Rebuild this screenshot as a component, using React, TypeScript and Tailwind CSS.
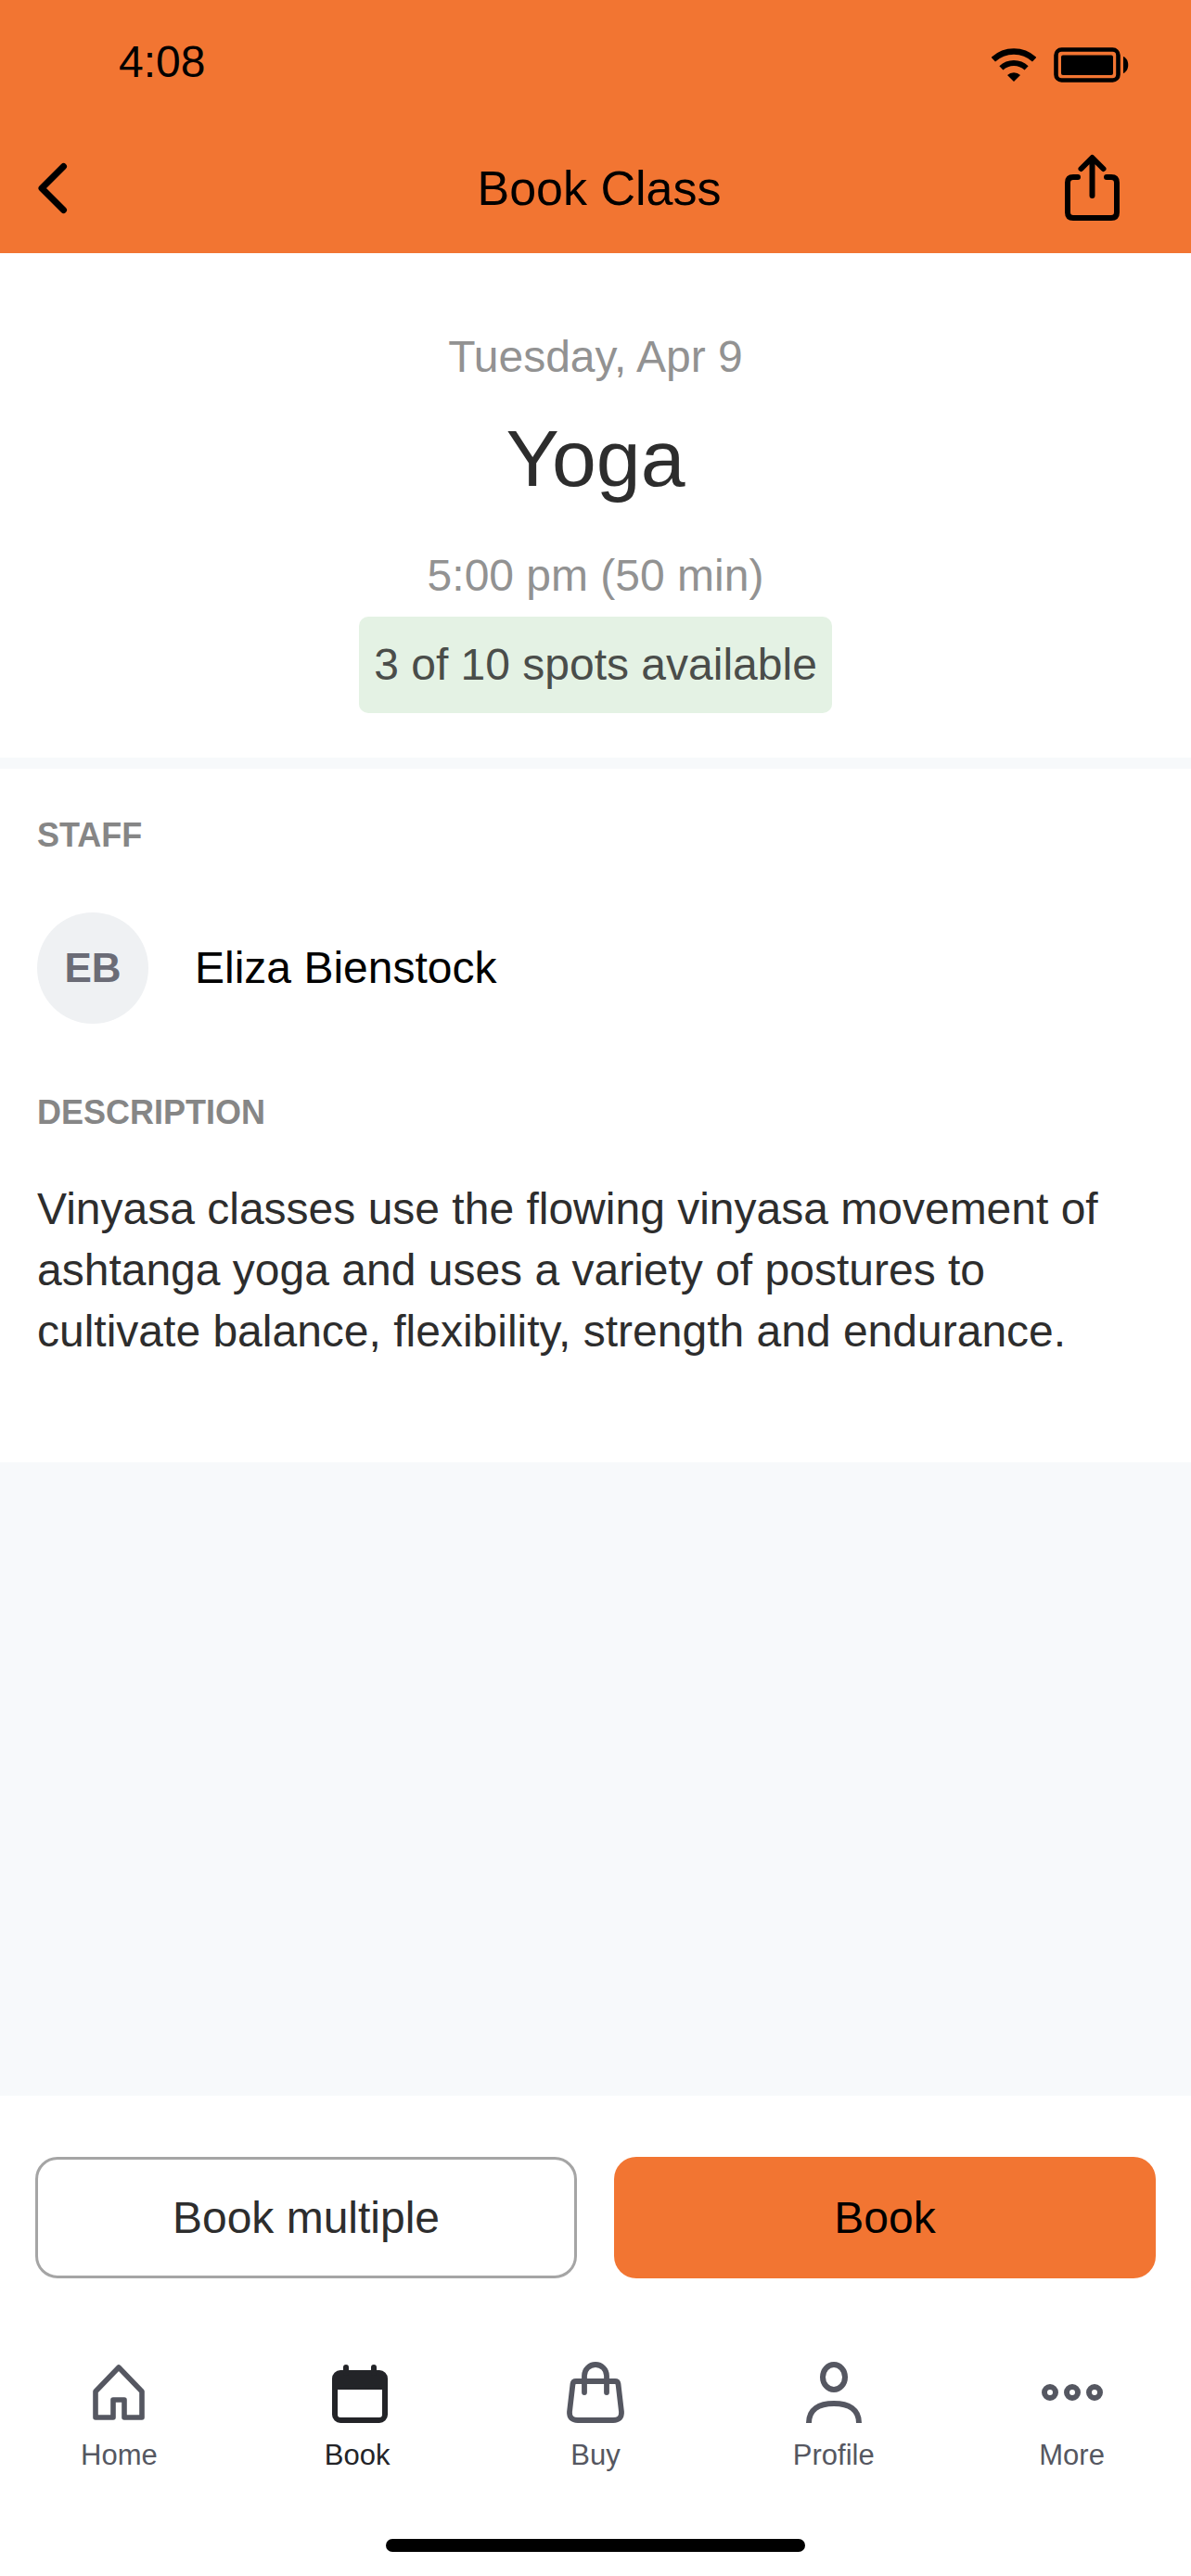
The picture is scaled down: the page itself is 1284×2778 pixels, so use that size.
import React, { useState } from 'react';

interface IconProps {
  className?: string;
}

interface Tab {
  id: string;
  label: string;
  Icon: React.FC<IconProps>;
}

const WifiIcon: React.FC<IconProps> = ({ className = '' }) => (
  <svg className={className} viewBox="0 0 48 36" fill="none" stroke="currentColor" aria-hidden="true">
    <path strokeWidth={6.5} d="M1.8 12.2A32.5 32.5 0 0 1 46.2 12.2" />
    <path strokeWidth={6} d="M10.4 21.4A20 20 0 0 1 37.6 21.4" />
    <path fill="currentColor" stroke="none" d="M24 36L17 29A10 10 0 0 1 31 29Z" />
  </svg>
);

const BatteryIcon: React.FC<IconProps> = ({ className = '' }) => (
  <svg className={className} viewBox="0 0 81 38" fill="none" aria-hidden="true">
    <rect x="2.5" y="2.5" width="67" height="33" rx="6" stroke="currentColor" strokeWidth={4.6} />
    <rect x="8" y="8.5" width="56" height="21.5" rx="2" fill="currentColor" />
    <path fill="currentColor" d="M75 10C82 12.5 82 25.5 75 28Z" />
  </svg>
);

const BackIcon: React.FC<IconProps> = ({ className = '' }) => (
  <svg className={className} viewBox="0 0 40 60" fill="none" stroke="currentColor" strokeWidth={7} strokeLinecap="round" strokeLinejoin="round" aria-hidden="true">
    <path d="M32.5 6.5L9 30L32.5 53.5" />
  </svg>
);

const ShareIcon: React.FC<IconProps> = ({ className = '' }) => (
  <svg className={className} viewBox="0 0 72 80" fill="none" stroke="currentColor" strokeWidth={6} strokeLinecap="round" strokeLinejoin="round" aria-hidden="true">
    <path d="M20 28H15Q9 28 9 34V66Q9 72 15 72H56Q62 72 62 66V34Q62 28 56 28H51" />
    <path d="M35.5 48V7.5M23.5 19L35.5 7L47.5 19" />
  </svg>
);

const HomeIcon: React.FC<IconProps> = ({ className = '' }) => (
  <svg className={className} viewBox="0 0 72 72" fill="none" stroke="currentColor" strokeWidth={5.6} strokeLinejoin="round" aria-hidden="true">
    <path d="M11 63V35L36 9L61 35V63H42V44H30V63Z" />
  </svg>
);

const CalendarIcon: React.FC<IconProps> = ({ className = '' }) => (
  <svg className={className} viewBox="-3 0 72 72" fill="none" stroke="currentColor" strokeWidth={6} strokeLinecap="round" aria-hidden="true">
    <rect x="9" y="15" width="54" height="51" rx="6" />
    <path fill="currentColor" stroke="none" d="M9 15H63V33H9Z" />
    <path d="M21 9V15M51 9V15" />
  </svg>
);

const BagIcon: React.FC<IconProps> = ({ className = '' }) => (
  <svg className={className} viewBox="0 0 72 72" fill="none" stroke="currentColor" strokeWidth={5.8} strokeLinecap="round" strokeLinejoin="round" aria-hidden="true">
    <path d="M15 24H57Q60 24 60.5 27L64 57Q64.5 66 55 66H17Q7.5 66 8 57L11.5 27Q12 24 15 24Z" />
    <path d="M24 36V18A12 12 0 0 1 48 18V36" />
  </svg>
);

const ProfileIcon: React.FC<IconProps> = ({ className = '' }) => (
  <svg className={className} viewBox="0 0 72 72" fill="none" stroke="currentColor" strokeWidth={6} aria-hidden="true">
    <ellipse cx="36" cy="19.5" rx="12" ry="13.5" />
    <path d="M9 69C9 54 20 48 36 48S63 54 63 69" />
  </svg>
);

const MoreIcon: React.FC<IconProps> = ({ className = '' }) => (
  <svg className={className} viewBox="0 0 72 72" fill="none" stroke="currentColor" strokeWidth={6} aria-hidden="true">
    <circle cx="12" cy="36" r="6" />
    <circle cx="36" cy="36" r="6" />
    <circle cx="60" cy="36" r="6" />
  </svg>
);

const tabs: Tab[] = [
  { id: 'home', label: 'Home', Icon: HomeIcon },
  { id: 'book', label: 'Book', Icon: CalendarIcon },
  { id: 'buy', label: 'Buy', Icon: BagIcon },
  { id: 'profile', label: 'Profile', Icon: ProfileIcon },
  { id: 'more', label: 'More', Icon: MoreIcon }
];

const Header: React.FC = () => (
  <header className="bg-[#f27532] text-black">
    <div className="flex h-[133px] items-center justify-between pl-32 pr-[67px]">
      <span className="text-[48px] leading-[60px]">4:08</span>
      <div className="mt-[7px] flex items-center gap-[19px]">
        <WifiIcon className="h-9 w-12" />
        <BatteryIcon className="h-[38px] w-[81px]" />
      </div>
    </div>
    <div className="grid h-[140px] grid-cols-[1fr_auto_1fr] items-center pl-9 pr-7">
      <button type="button" aria-label="Back" className="justify-self-start">
        <BackIcon className="h-[60px] w-10" />
      </button>
      <h1 className="text-[52px] leading-[60px]">Book Class</h1>
      <button type="button" aria-label="Share" className="mr-[42px] justify-self-end">
        <ShareIcon className="h-20 w-[72px]" />
      </button>
    </div>
  </header>
);

const ClassSummary: React.FC = () => (
  <section className="flex flex-col items-center pt-[82px] pb-12 text-[48px] leading-[60px]">
    <p className="text-[#929292]">Tuesday, Apr 9</p>
    <h2 className="mt-[29px] text-[86px] leading-[100px] text-[#2d2d2d]">Yoga</h2>
    <p className="mt-[47px] text-[#929292]">5:00 pm (50 min)</p>
    <p className="mt-[14px] rounded-[10px] bg-[#e4f2e4] px-4 py-[22px] text-[#4a4d4a]">3 of 10 spots available</p>
  </section>
);

const ClassDetails: React.FC = () => (
  <section className="px-10 pt-[50px] pb-[108px]">
    <h3 className="text-[36px] leading-[44px] font-bold text-[#868686]">STAFF</h3>
    <div className="mt-[61px] flex items-center gap-[50px]">
      <div className="flex size-[120px] items-center justify-center rounded-full bg-[#eff1f3] text-[44px] font-bold text-[#6b6c76]">
        EB
      </div>
      <span className="text-[48px] leading-[60px] text-black">Eliza Bienstock</span>
    </div>
    <h3 className="mt-[74px] text-[36px] leading-[44px] font-bold text-[#868686]">DESCRIPTION</h3>
    <p className="mt-[49px] text-[48px] leading-[66px] text-[#2d2d2d]">
      Vinyasa classes use the flowing vinyasa movement of ashtanga yoga and uses a variety of postures to cultivate
      balance, flexibility, strength and endurance.
    </p>
  </section>
);

export default function App() {
  const [activeTab, setActiveTab] = useState('book');

  return (
    <div className="flex min-h-screen flex-col bg-white font-['Liberation_Sans',Arial,sans-serif]">
      <Header />

      <main className="flex flex-1 flex-col">
        <ClassSummary />
        <div className="h-3 bg-[#f7f9fb]"></div>
        <ClassDetails />
        <div className="flex-1 bg-[#f7f9fb]"></div>
      </main>

      <footer className="pt-[66px] pb-[26px]">
        <div className="grid grid-cols-2 gap-10 px-[38px] text-[48px]">
          <button type="button" className="h-[131px] rounded-3xl border-3 border-[#a5a5a5] text-[#2d2d2d]">
            Book multiple
          </button>
          <button type="button" className="h-[131px] rounded-3xl bg-[#f27532] text-black">
            Book
          </button>
        </div>

        <nav className="mt-[87px] grid grid-cols-5">
          {tabs.map(({ id, label, Icon }) => (
            <button
              key={id}
              type="button"
              onClick={() => setActiveTab(id)}
              className={`flex flex-col items-center gap-[14px] ${activeTab === id ? 'text-[#232428]' : 'text-[#555761]'}`}
            >
              <Icon className="size-[72px]" />
              <span className="text-[31px] leading-[36px]">{label}</span>
            </button>
          ))}
        </nav>

        <div className="mx-auto mt-[72px] h-[14px] w-[452px] rounded-full bg-black"></div>
      </footer>
    </div>
  );
}
